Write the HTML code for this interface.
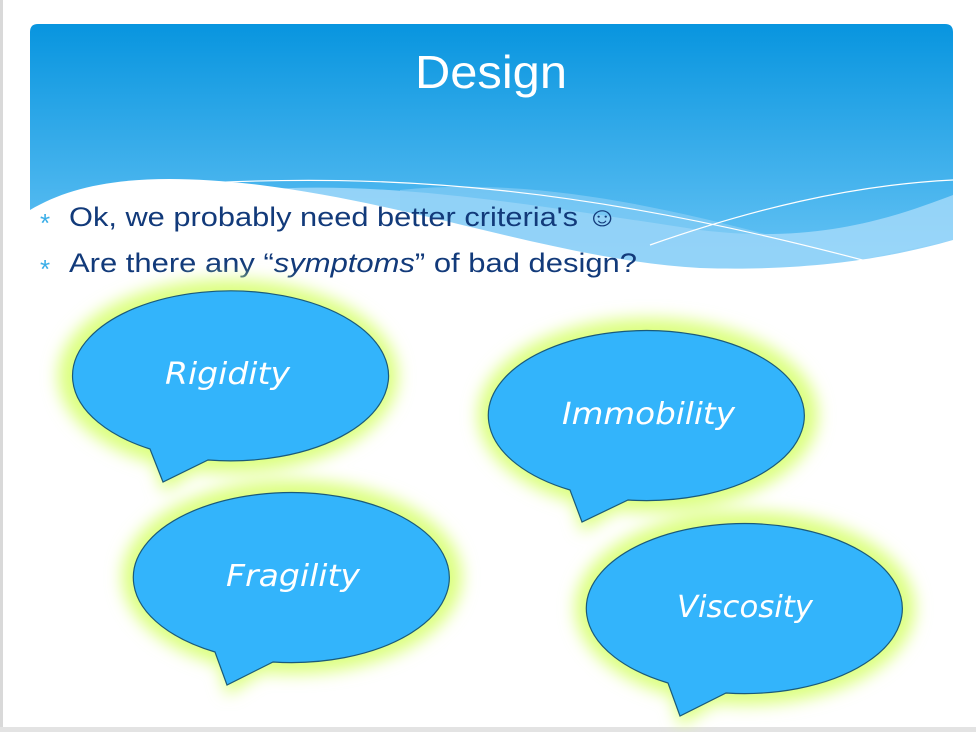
<!DOCTYPE html>
<html><head><meta charset="utf-8"><style>
html,body{margin:0;padding:0;width:976px;height:732px;overflow:hidden;background:#fff}
svg{display:block}
</style></head><body>
<svg width="976" height="732" viewBox="0 0 976 732" xmlns="http://www.w3.org/2000/svg">
<defs>
<linearGradient id="hg" x1="0" y1="0" x2="0" y2="1">
<stop offset="0" stop-color="#0895df"/>
<stop offset="1" stop-color="#6cc6f6"/>
</linearGradient>
<filter id="glow" x="-20%" y="-20%" width="140%" height="140%"><feGaussianBlur stdDeviation="8"/></filter>
<clipPath id="hc"><path d="M30 32 Q30 24 38 24 L945 24 Q953 24 953 32 L953 280 L30 280Z"/></clipPath>
</defs>
<rect x="0" y="0" width="3" height="732" fill="#d9d9d9"/>
<rect x="0" y="727" width="976" height="5" fill="#e3e3e3"/>
<g clip-path="url(#hc)">
<rect x="30" y="24" width="923" height="256" fill="url(#hg)"/>
<path d="M180 200 C330 170 500 200 700 230 C820 245 900 215 953 195 L953 280 L180 280Z" fill="#a6dbfa" opacity="0.8"/>
<path d="M400 190 C550 175 700 215 860 260 L953 240 L953 280 L400 280Z" fill="#8fd0f7" opacity="0.6"/>
<path d="M30 210 C80 180 150 172 260 185 C420 205 560 260 700 268 C820 272 900 255 953 240 L953 280 L30 280Z" fill="#fff"/>
<path d="M170 185 C400 170 600 190 870 262" stroke="#fff" stroke-width="1.2" fill="none"/>
<path d="M650 245 C750 210 850 185 953 180" stroke="#fff" stroke-width="1.2" fill="none"/>
</g>
<text x="415" y="88" textLength="152" lengthAdjust="spacingAndGlyphs" font-family="Liberation Sans, sans-serif" font-size="46" fill="#fff">Design</text>
<g font-family="Liberation Sans, sans-serif" font-size="27" fill="#123a7a">
<text x="40" y="232" fill="#3aaee8" font-size="26">*</text>
<text x="69" y="226" textLength="549" lengthAdjust="spacingAndGlyphs">Ok, we probably need better criteria's ☺</text>
<text x="40" y="278" fill="#3aaee8" font-size="26">*</text>
<text x="69" y="272" textLength="568" lengthAdjust="spacingAndGlyphs">Are there any “<tspan font-style="italic">symptoms</tspan>” of bad design?</text>
</g>
<g filter="url(#glow)" fill="#dcff80">
<ellipse cx="228" cy="376" rx="170" ry="97"/><path d="M150 449 L163 492 L215 460Z"/>
<ellipse cx="648" cy="415" rx="170" ry="97"/><path d="M570 490 L582 532 L635 500Z"/>
<ellipse cx="292" cy="577" rx="170" ry="97"/><path d="M215 652 L227 695 L280 662Z"/>
<ellipse cx="745" cy="608" rx="170" ry="97"/><path d="M668 683 L680 726 L733 693Z"/>
</g>
<g fill="#33b4fb" stroke="#1a5a7a" stroke-width="1.2">
<path d="M150 449 A158 85 0 1 1 208 460 L163 482Z"/>
<path d="M570 490 A158 85 0 1 1 628 500 L582 522Z"/>
<path d="M215 652 A158 85 0 1 1 273 662 L227 685Z"/>
<path d="M668 683 A158 85 0 1 1 726 693 L680 716Z"/>
</g>
<g font-family="DejaVu Sans, sans-serif" font-style="italic" font-size="30" fill="#fff" lengthAdjust="spacingAndGlyphs">
<text x="165" y="384" textLength="125" lengthAdjust="spacingAndGlyphs">Rigidity</text>
<text x="562" y="424" textLength="173" lengthAdjust="spacingAndGlyphs">Immobility</text>
<text x="226" y="586" textLength="134" lengthAdjust="spacingAndGlyphs">Fragility</text>
<text x="677" y="617" textLength="136" lengthAdjust="spacingAndGlyphs">Viscosity</text>
</g>
</svg>
</body></html>
